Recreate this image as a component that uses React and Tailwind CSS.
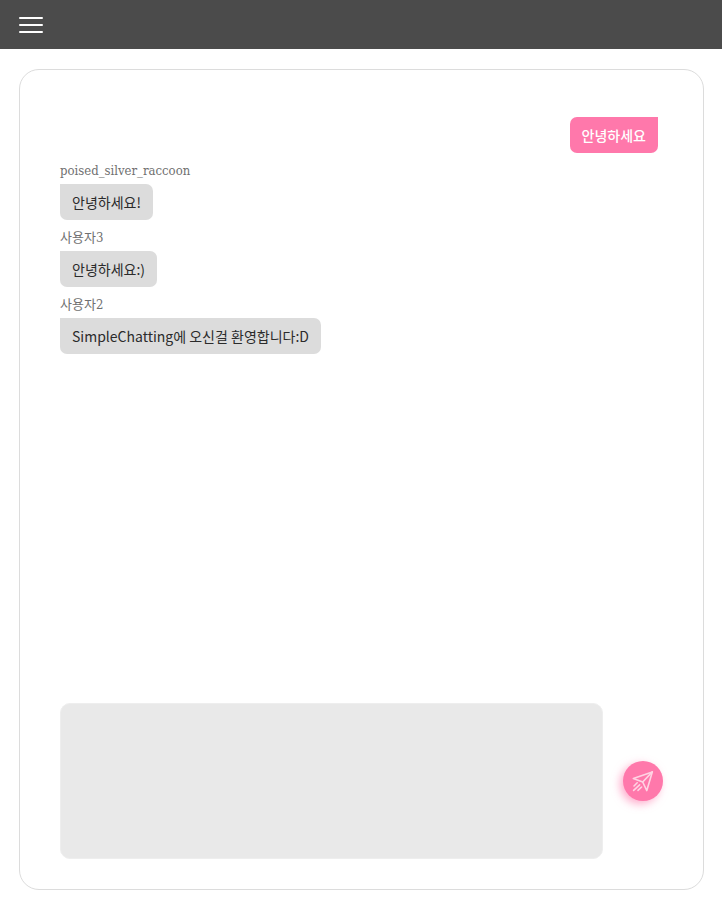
const messages = [
  { id: 1, mine: true, text: '안녕하세요' },
  { id: 2, author: 'poised_silver_raccoon', text: '안녕하세요!' },
  { id: 3, author: '사용자3', text: '안녕하세요:)' },
  { id: 4, author: '사용자2', text: 'SimpleChatting에 오신걸 환영합니다:D' },
];

function Message({ message }) {
  if (message.mine) {
    return (
      <li className="mr-[5px] self-end rounded-[7px] rounded-tr-none bg-[#ff78ab] px-3 py-2 font-medium text-white">
        {message.text}
      </li>
    );
  }
  return (
    <li className="flex flex-col items-start">
      <span className="mb-1 pt-2 font-['DejaVu_Serif_Condensed','DejaVu_Serif','Noto_Sans_CJK_KR',serif] text-[13px] leading-[19px] text-[#707070]">
        {message.author}
      </span>
      <p className="rounded-[7px] rounded-tl-none bg-[#dcdcdc] px-3 py-2 text-[#2b2b2b]">{message.text}</p>
    </li>
  );
}

function SendIcon() {
  return (
    <svg
      viewBox="0 0 24 24"
      className="size-6"
      fill="none"
      stroke="#ffd3e3"
      strokeWidth="1.6"
      strokeLinecap="round"
      strokeLinejoin="round"
      aria-hidden="true"
    >
      <path d="M21.3 2.9 2.3 9.4l9.4 3.6 4.1 8.6Z" />
      <path d="M21.3 2.9 11.7 13M6.2 13.8 3 17M8.6 15.8 2.6 21.4M10.6 18 7 21.4" />
    </svg>
  );
}

export default function App() {
  return (
    <div className="flex min-h-screen flex-col bg-white font-['Noto_Sans_CJK_KR',sans-serif] text-[14px] leading-5">
      <header className="flex h-[49px] items-center bg-[#4b4b4b] px-[19px]">
        <button type="button" aria-label="메뉴" className="flex w-6 flex-col gap-[5px]">
          <span className="h-0.5 w-full rounded-xs bg-white" />
          <span className="h-0.5 w-full rounded-xs bg-white" />
          <span className="h-0.5 w-full rounded-xs bg-white" />
        </button>
      </header>
      <main className="mt-5 mr-[18px] mb-[19px] ml-[19px] flex grow flex-col rounded-[20px] border border-[#dcdcdc] px-10 pt-[47px] pb-[30px]">
        <ul className="flex grow flex-col">
          {messages.map((message) => (
            <Message key={message.id} message={message} />
          ))}
        </ul>
        <form className="flex items-center gap-5" onSubmit={(event) => event.preventDefault()}>
          <textarea
            aria-label="메시지"
            className="h-[156px] min-w-0 grow resize-none rounded-[10px] border border-[#eeeeee] bg-[#e9e9e9] p-3 outline-none"
          />
          <button
            type="submit"
            aria-label="보내기"
            className="flex size-10 shrink-0 items-center justify-center rounded-full bg-[#ff78ab] shadow-[-3px_3px_8px_#ff78ab99]"
          >
            <SendIcon />
          </button>
        </form>
      </main>
    </div>
  );
}
